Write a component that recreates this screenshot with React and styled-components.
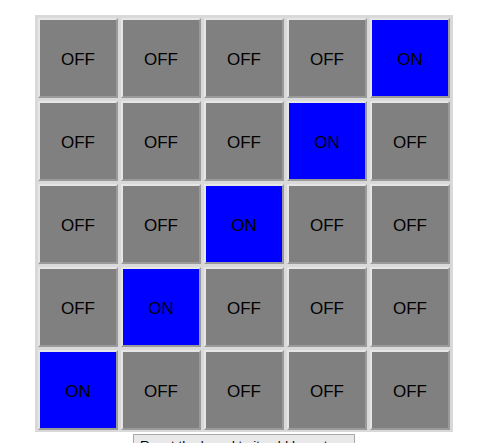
import React from 'react'
import styled, { createGlobalStyle } from 'styled-components'

const Global = createGlobalStyle`
  body {
    margin: 0;
    background: #fff;
    font-family: "Liberation Sans", Arial, sans-serif;
  }
`

const Page = styled.div`
  display: flex;
  flex-direction: column;
  align-items: center;
  gap: 2px;
  width: 418px;
  padding: 15px 0 0 35px;
`

const Board = styled.div`
  display: grid;
  grid-template-columns: repeat(5, 80px);
  grid-auto-rows: 80px;
  gap: 3px;
  padding: 3px 3px 2px 3px;
  background: #d9d9d9;
`

const Cell = styled.div`
  display: flex;
  align-items: center;
  justify-content: center;
  box-sizing: border-box;
  padding-top: 3px;
  border: 2px solid;
  border-color: #e6e6e6 #9a9a9a #9a9a9a #e6e6e6;
  background: ${(p) => (p.$on ? '#0000ff' : '#808080')};
  color: #000;
  font-size: 17px;
`

const ResetButton = styled.button`
  width: 222px;
  padding: 3px 6px;
  border: 1px solid #a9a9a9;
  background: #e9e9e9;
  font-family: "Liberation Sans", Arial, sans-serif;
  font-size: 13.33px;
  line-height: 16px;
  text-align: left;
  color: #000;
`

const SIZE = 5

export default class App extends React.PureComponent {
  render() {
    const cells = []
    for (let r = 0; r < SIZE; r++) {
      for (let c = 0; c < SIZE; c++) {
        const on = r + c === SIZE - 1
        cells.push(
          <Cell key={`${r}-${c}`} $on={on}>{on ? 'ON' : 'OFF'}</Cell>
        )
      }
    }
    return (
      <>
        <Global />
        <Page>
          <Board>{cells}</Board>
          <ResetButton>Reset the board to its old layout</ResetButton>
        </Page>
      </>
    )
  }
}
